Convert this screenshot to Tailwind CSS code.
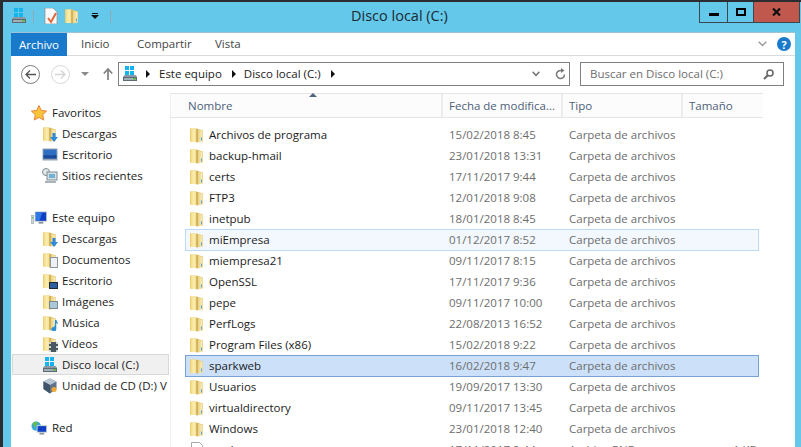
<!DOCTYPE html>
<html lang="es"><head><meta charset="utf-8"><title>Disco local (C:)</title>
<script src="https://cdn.jsdelivr.net/npm/@tailwindcss/browser@4"></script></head>
<body class="m-0 overflow-hidden bg-[#2c2d30]">
<svg width="0" height="0" class="absolute">
<defs>
<linearGradient id="fy" x1="0" x2="1" y1="0" y2="0"><stop offset="0" stop-color="#f2d77e"/><stop offset=".55" stop-color="#fbeeb0"/><stop offset="1" stop-color="#f3dc8c"/></linearGradient>
<linearGradient id="fr" x1="0" x2="1" y1="0" y2="0"><stop offset="0" stop-color="#e9cd78"/><stop offset="1" stop-color="#f8efc4"/></linearGradient>
</defs>
<symbol id="folder" viewBox="0 0 16 16"><path d="M1 1.500h6.500L14 3.500V14.500H1z" fill="#e6c76e"/><path d="M1.500 1.500H7.500V15H1.500z" fill="url(#fy)"/><path d="M8.500 2.500l5 1.500V14.500l-5 1z" fill="url(#fr)"/><path d="M8 2v13.500" stroke="#bd9a45" stroke-width="1"/><path d="M12 10.500h1v3h-1z" fill="#5aa3d6"/></symbol>
<symbol id="drive" viewBox="0 0 16 16"><g fill="#14b4ef"><path d="M3 0h4v4H3zM8 0h4v4H8zM3 5h4v4H3zM8 5h4v4H8z" /></g><path d="M1 10.500 2.500 9h11l1.500 1.500V15H1z" fill="#8c99a3"/><path d="M1 11h14v4H1z" fill="#5f6b73"/><path d="M2 12h12v2H2z" fill="#9fb0b8"/><path d="M11 12h3v1.500h-3z" fill="#58b947"/></symbol>
<symbol id="star" viewBox="0 0 16 16"><path d="M8 .500l2.300 5 5.300.600-3.900 3.600 1 5.300L8 12.400 3.300 15l1-5.300L.400 6.100l5.300-.600z" fill="#fbc53a" stroke="#e9823a"/></symbol>
<symbol id="monitor" viewBox="0 0 16 16"><rect x=".5" y="1.500" width="15" height="12" fill="#96a5b5"/><rect x="1.500" y="2.500" width="13" height="9" fill="#2f6ec0"/><path d="M1.500 8c4 0 8 1 13 0v3.500h-13z" fill="#1a4a98"/></symbol>
<symbol id="recent" viewBox="0 0 16 16"><circle cx="4" cy="4" r="3.500" fill="#e6e9eb" stroke="#7c8a92"/><rect x="5" y="4" width="10" height="8" fill="#d7dee2" stroke="#808e96"/><rect x="7" y="6" width="6" height="4" fill="#72b0d4"/><rect x="3" y="13" width="11" height="2" fill="#aab4ba"/></symbol>
<symbol id="pc" viewBox="0 0 18 16"><rect x="0" y="5" width="3" height="9" fill="#cfd6da" stroke="#86919a" stroke-width=".5"/><rect x=".8" y="7" width="1.400" height="1.400" fill="#4cc04a"/><rect x="4" y="1" width="13" height="11" fill="#c5ced4"/><rect x="5" y="2" width="11" height="9" fill="#0f3fc4"/><path d="M5 2h7l-3 9H5z" fill="#2f78e4"/><rect x="8" y="12" width="5" height="2" fill="#8d98a0"/></symbol>
<symbol id="globe" viewBox="0 0 18 16"><circle cx="5.500" cy="6" r="5" fill="#3ba9d6"/><path d="M2 3c2-2 5-2 5 0s-2 1-2 3-3 1-3-3z" fill="#66bb4c"/><rect x="6" y="5" width="11" height="8" fill="#c6d0d6"/><rect x="7" y="6" width="9" height="6" fill="#0f3fc4"/><rect x="9" y="13" width="5" height="2" fill="#8d98a0"/></symbol>
<symbol id="cd" viewBox="0 0 16 16"><path d="M8 .500 14.500 3.500V11L8 15.500 1.500 11V3.500z" fill="#5f7488"/><path d="M8 .500 14.500 3.500 8 7 1.500 3.500z" fill="#b9c8d4"/><path d="M1.500 3.500 8 7v8.500L1.500 11z" fill="#3f5468"/><circle cx="12" cy="11.500" r="2.500" fill="#f3a733"/></symbol>
<symbol id="arrowdn" viewBox="0 0 8 9"><path d="M2.500 0h3v4H8L4 9 0 4h2.500z" fill="#2b8ade"/></symbol>
</svg>

<div class="flex flex-col w-[801px] h-[447px] mt-[2px] ml-[3px] bg-[#63c8ea] overflow-hidden font-['Open_Sans','Noto_Sans',sans-serif] text-[11.5px] text-[#1b1b1b] leading-none">
  <!-- title bar -->
  <div class="flex items-start h-[30px] shrink-0">
    <div class="flex items-center gap-[6px] w-[345px] pl-[8px] pt-[6px]">
      <svg class="w-[16px] h-[16px]"><use href="#drive"/></svg>
      <span class="w-px h-[13px] bg-[#8fa9b5]"></span>
      <svg class="w-[16px] h-[16px] ml-[3px]" viewBox="0 0 16 16"><path d="M2 0h8l4 4v12H2z" fill="#fafafa" stroke="#8d8d8d" stroke-width=".7"/><path d="M5 10l3 4 5-9" fill="none" stroke="#e2683a" stroke-width="2"/></svg>
      <svg class="w-[16px] h-[16px] -ml-[1px]"><use href="#folder"/></svg>
      <svg class="w-[8px] h-[6px] ml-[5px]" viewBox="0 0 8 6"><path d="M1 0h6v1H1zM0 2h8L4 6z" fill="#111"/></svg>
      <span class="w-px h-[13px] bg-[#8fa9b5] ml-[5px]"></span>
    </div>
    <div class="flex-1 pt-[7px] pl-[3px] text-[14.5px] text-[#1c2a30]">Disco local (C:)</div>
    <div class="flex h-[21px] w-[101px] mr-[4px] border border-t-0 border-[#39474e] shrink-0">
      <div class="flex w-[28px] items-center justify-center border-r border-[#39474e]"><span class="block w-[10px] h-[3px] mt-[4px] bg-black"></span></div>
      <div class="flex w-[26px] items-center justify-center border-r border-[#39474e]"><span class="block w-[10px] h-[8px] border-2 border-black"></span></div>
      <div class="flex flex-1 items-center justify-center bg-[#c0584e]"><svg class="w-[9px] h-[8px]" viewBox="0 0 9 8"><path d="M1 .5l7 7M8 .5l-7 7" stroke="#111" stroke-width="2.200"/></svg></div>
    </div>
  </div>
  <!-- window -->
  <div class="flex flex-col w-[784px] ml-[8px] flex-1 bg-white min-h-0">
    <!-- ribbon tabs -->
    <div class="flex items-stretch h-[24px] shrink-0 border-t border-[#9cc4d6] border-b border-b-[#dadbdc]">
      <div class="flex items-center justify-center w-[56px] -mb-px bg-[#1979ca] text-white">Archivo</div>
      <div class="flex items-center pl-[14px] w-[56px] text-[#444]">Inicio</div>
      <div class="flex items-center pl-[14px] w-[80px] text-[#444]">Compartir</div>
      <div class="flex items-center pl-[12px] w-[50px] text-[#444]">Vista</div>
      <div class="flex flex-1 items-center justify-end gap-[10px] pr-[4px]">
        <svg class="w-[9px] h-[6px]" viewBox="0 0 9 6"><path d="M.7.700 4.500 4.500 8.300.700" fill="none" stroke="#9a9a9a" stroke-width="1.400"/></svg>
        <span class="flex items-center justify-center w-[14px] h-[14px] rounded-full bg-[#1979ca] text-white font-bold text-[11px]">?</span>
      </div>
    </div>
    <!-- nav -->
    <div class="flex items-center h-[37px] pb-[1px] shrink-0">
      <div class="flex items-center w-[107px] pl-[10px] shrink-0">
        <span class="flex items-center justify-center w-[19px] h-[19px] rounded-full border border-[#7a7a7a]"><svg class="w-[11px] h-[9px]" viewBox="0 0 11 9"><path d="M5 .5 1 4.500 5 8.500M1 4.500h10" fill="none" stroke="#555" stroke-width="1.300"/></svg></span>
        <span class="flex items-center justify-center w-[19px] h-[19px] ml-[11px] rounded-full border border-[#d8d8d8]"><svg class="w-[11px] h-[9px]" viewBox="0 0 11 9"><path d="M6 .5 10 4.500 6 8.500M0 4.500h10" fill="none" stroke="#d4d4d4" stroke-width="1.300"/></svg></span>
        <span class="w-0 h-0 ml-[11px] border-x-[4px] border-x-transparent border-t-[4px] border-t-[#8a8a8a]"></span>
        <svg class="w-[10px] h-[12px] ml-[14px]" viewBox="0 0 10 12"><path d="M.8 5.500 5 1l4.200 4.500M5 1v11" fill="none" stroke="#7f7f7f" stroke-width="1.700"/></svg>
      </div>
      <div class="flex items-center w-[452px] h-[24px] border border-[#7f7f7f] shrink-0 pl-[3px]">
        <svg class="w-[16px] h-[16px]"><use href="#drive"/></svg>
        <span class="w-0 h-0 ml-[8px] border-y-[4px] border-y-transparent border-l-[4px] border-l-[#111]"></span>
        <span class="ml-[9px]">Este equipo</span>
        <span class="w-0 h-0 ml-[10px] border-y-[4px] border-y-transparent border-l-[4px] border-l-[#111]"></span>
        <span class="ml-[8px]">Disco local (C:)</span>
        <span class="w-0 h-0 ml-[10px] border-y-[4px] border-y-transparent border-l-[4px] border-l-[#111]"></span>
        <span class="flex-1"></span>
        <svg class="w-[8px] h-[6px] mr-[15px]" viewBox="0 0 8 6"><path d="M.7.700 4 4.500 7.300.700" fill="none" stroke="#666" stroke-width="1.300"/></svg>
        <svg class="w-[11px] h-[12px] mr-[3px]" viewBox="0 0 11 12"><path d="M9.500 6.500a4 4 0 1 1-2-3.500" fill="none" stroke="#777" stroke-width="1.500"/><path d="M6 0v5l3.500-2.500z" fill="#777"/></svg>
      </div>
      <div class="flex items-center justify-between w-[204px] h-[24px] ml-[10px] border border-[#7f7f7f] pl-[9px] pr-[9px] text-[#6d6d6d]">
        <span>Buscar en Disco local (C:)</span>
        <svg class="w-[11px] h-[11px]" viewBox="0 0 11 11"><circle cx="7" cy="4" r="3" fill="none" stroke="#666" stroke-width="1.500"/><path d="M4.800 6.200 1 10" stroke="#666" stroke-width="2"/></svg>
      </div>
    </div>
    <!-- main -->
    <div class="flex flex-1 min-h-0">
      <!-- sidebar -->
      <nav class="flex flex-col w-[160px] pt-[9px] shrink-0 border-r border-[#f0f0f0] overflow-hidden">
        <div class="flex items-center h-[21px] pl-[20px] gap-[5px]"><svg class="w-[16px] h-[16px]"><use href="#star"/></svg>Favoritos</div>
        <div class="flex items-center h-[21px] pl-[31px] gap-[4px]"><span class="relative w-[16px] h-[16px]"><svg class="w-[16px] h-[16px]"><use href="#folder"/></svg><svg class="absolute right-0 bottom-0 w-[8px] h-[9px]"><use href="#arrowdn"/></svg></span>Descargas</div>
        <div class="flex items-center h-[21px] pl-[31px] gap-[4px]"><svg class="w-[16px] h-[16px]"><use href="#monitor"/></svg>Escritorio</div>
        <div class="flex items-center h-[21px] pl-[31px] gap-[4px]"><svg class="w-[16px] h-[16px]"><use href="#recent"/></svg>Sitios recientes</div>
        <div class="h-[21px]"></div>
        <div class="flex items-center h-[21px] pl-[20px] gap-[4px]"><svg class="w-[17px] h-[16px]"><use href="#pc"/></svg>Este equipo</div>
        <div class="flex items-center h-[21px] pl-[31px] gap-[4px]"><span class="relative w-[16px] h-[16px]"><svg class="w-[16px] h-[16px]"><use href="#folder"/></svg><svg class="absolute right-0 bottom-0 w-[8px] h-[9px]"><use href="#arrowdn"/></svg></span>Descargas</div>
        <div class="flex items-center h-[21px] pl-[31px] gap-[4px]"><span class="relative w-[16px] h-[16px]"><svg class="w-[16px] h-[16px]"><use href="#folder"/></svg><span class="absolute right-0 bottom-0 w-[8px] h-[11px] bg-[#eef1f3] border border-[#8b969e]"></span></span>Documentos</div>
        <div class="flex items-center h-[21px] pl-[31px] gap-[4px]"><span class="relative w-[16px] h-[16px]"><svg class="w-[16px] h-[16px]"><use href="#folder"/></svg><span class="absolute right-0 bottom-0 w-[9px] h-[7px] bg-[#2f5e9e] border border-[#1d2a3a]"></span></span>Escritorio</div>
        <div class="flex items-center h-[21px] pl-[31px] gap-[4px]"><span class="relative w-[16px] h-[16px]"><svg class="w-[16px] h-[16px]"><use href="#folder"/></svg><span class="absolute right-0 bottom-[1px] w-[9px] h-[8px] bg-[#a9c7d6] border border-[#7b8a92]"></span></span>Imágenes</div>
        <div class="flex items-center h-[21px] pl-[31px] gap-[4px]"><span class="relative w-[16px] h-[16px]"><svg class="w-[16px] h-[16px]"><use href="#folder"/></svg><svg class="absolute right-0 bottom-0 w-[8px] h-[11px]" viewBox="0 0 8 11"><path d="M5 0h1.500c0 2 1.500 2 1.500 4L6.300 3V9a2.500 2 0 1 1-1.300-1.700z" fill="#2a8fd6"/></svg></span>Música</div>
        <div class="flex items-center h-[21px] pl-[31px] gap-[4px]"><span class="relative w-[16px] h-[16px]"><svg class="w-[16px] h-[16px]"><use href="#folder"/></svg><span class="absolute right-0 bottom-0 w-[9px] h-[10px] bg-[#4a5860] border-x-2 border-dotted border-[#cfd6da]"></span></span>Vídeos</div>
        <div class="flex items-center h-[21px] ml-[1px] pl-[29px] gap-[4px] w-[157px] bg-[#f0f0f0] border border-[#d9d9d9]"><svg class="w-[16px] h-[16px]"><use href="#drive"/></svg>Disco local (C:)</div>
        <div class="flex items-center h-[21px] pl-[31px] gap-[4px] whitespace-nowrap overflow-hidden"><svg class="w-[16px] h-[16px] shrink-0"><use href="#cd"/></svg>Unidad de CD (D:) V</div>
        <div class="h-[21px]"></div>
        <div class="flex items-center h-[21px] pl-[20px] gap-[4px]"><svg class="w-[17px] h-[16px]"><use href="#globe"/></svg>Red</div>
      </nav>
      <!-- list -->
      <section class="flex flex-col flex-1 min-w-0 text-[#6d6d6d]">
        <div class="relative flex h-[25px] w-[592px] shrink-0 bg-[#fcfcfc] border-y border-[#e5e5e5] text-[#4c607a]">
          <span class="absolute left-[138px] -top-[1px] w-0 h-0 border-x-[4px] border-x-transparent border-b-[4px] border-b-[#51647a]"></span>
          <div class="flex items-center w-[272px] pl-[17px] border-r-2 border-[#ececec]">Nombre</div>
          <div class="flex items-center w-[120px] pl-[6px] border-r-2 border-[#ececec]">Fecha de modifica...</div>
          <div class="flex items-center w-[120px] pl-[6px] border-r-2 border-[#ececec]">Tipo</div>
          <div class="flex items-center flex-1 pl-[6px]">Tamaño</div>
        </div>
        <div class="pt-[6px] pl-[14px]">
          <div class="flex items-center h-[21px] w-[574px] pl-[3px] border border-transparent"><svg class="w-[16px] h-[16px]"><use href="#folder"/></svg><span class="w-[240px] ml-[4px] text-[#1b1b1b]">Archivos de programa</span><span class="w-[120px]">15/02/2018 8:45</span><span>Carpeta de archivos</span></div>
          <div class="flex items-center h-[21px] w-[574px] pl-[3px] border border-transparent"><svg class="w-[16px] h-[16px]"><use href="#folder"/></svg><span class="w-[240px] ml-[4px] text-[#1b1b1b]">backup-hmail</span><span class="w-[120px]">23/01/2018 13:31</span><span>Carpeta de archivos</span></div>
          <div class="flex items-center h-[21px] w-[574px] pl-[3px] border border-transparent"><svg class="w-[16px] h-[16px]"><use href="#folder"/></svg><span class="w-[240px] ml-[4px] text-[#1b1b1b]">certs</span><span class="w-[120px]">17/11/2017 9:44</span><span>Carpeta de archivos</span></div>
          <div class="flex items-center h-[21px] w-[574px] pl-[3px] border border-transparent"><svg class="w-[16px] h-[16px]"><use href="#folder"/></svg><span class="w-[240px] ml-[4px] text-[#1b1b1b]">FTP3</span><span class="w-[120px]">12/01/2018 9:08</span><span>Carpeta de archivos</span></div>
          <div class="flex items-center h-[21px] w-[574px] pl-[3px] border border-transparent"><svg class="w-[16px] h-[16px]"><use href="#folder"/></svg><span class="w-[240px] ml-[4px] text-[#1b1b1b]">inetpub</span><span class="w-[120px]">18/01/2018 8:45</span><span>Carpeta de archivos</span></div>
          <div class="flex items-center h-[22px] -mb-px w-[574px] pl-[3px] bg-[#f3f8fe] border border-[#bcd9f5]"><svg class="w-[16px] h-[16px]"><use href="#folder"/></svg><span class="w-[240px] ml-[4px] text-[#1b1b1b]">miEmpresa</span><span class="w-[120px]">01/12/2017 8:52</span><span>Carpeta de archivos</span></div>
          <div class="flex items-center h-[21px] w-[574px] pl-[3px] border border-transparent"><svg class="w-[16px] h-[16px]"><use href="#folder"/></svg><span class="w-[240px] ml-[4px] text-[#1b1b1b]">miempresa21</span><span class="w-[120px]">09/11/2017 8:15</span><span>Carpeta de archivos</span></div>
          <div class="flex items-center h-[21px] w-[574px] pl-[3px] border border-transparent"><svg class="w-[16px] h-[16px]"><use href="#folder"/></svg><span class="w-[240px] ml-[4px] text-[#1b1b1b]">OpenSSL</span><span class="w-[120px]">17/11/2017 9:36</span><span>Carpeta de archivos</span></div>
          <div class="flex items-center h-[21px] w-[574px] pl-[3px] border border-transparent"><svg class="w-[16px] h-[16px]"><use href="#folder"/></svg><span class="w-[240px] ml-[4px] text-[#1b1b1b]">pepe</span><span class="w-[120px]">09/11/2017 10:00</span><span>Carpeta de archivos</span></div>
          <div class="flex items-center h-[21px] w-[574px] pl-[3px] border border-transparent"><svg class="w-[16px] h-[16px]"><use href="#folder"/></svg><span class="w-[240px] ml-[4px] text-[#1b1b1b]">PerfLogs</span><span class="w-[120px]">22/08/2013 16:52</span><span>Carpeta de archivos</span></div>
          <div class="flex items-center h-[21px] w-[574px] pl-[3px] border border-transparent"><svg class="w-[16px] h-[16px]"><use href="#folder"/></svg><span class="w-[240px] ml-[4px] text-[#1b1b1b]">Program Files (x86)</span><span class="w-[120px]">15/02/2018 9:22</span><span>Carpeta de archivos</span></div>
          <div class="flex items-center h-[22px] -mb-px w-[574px] pl-[3px] bg-[#cce1f9] border border-[#78a2d2]"><svg class="w-[16px] h-[16px]"><use href="#folder"/></svg><span class="w-[240px] ml-[4px] text-[#1b1b1b]">sparkweb</span><span class="w-[120px]">16/02/2018 9:47</span><span>Carpeta de archivos</span></div>
          <div class="flex items-center h-[21px] w-[574px] pl-[3px] border border-transparent"><svg class="w-[16px] h-[16px]"><use href="#folder"/></svg><span class="w-[240px] ml-[4px] text-[#1b1b1b]">Usuarios</span><span class="w-[120px]">19/09/2017 13:30</span><span>Carpeta de archivos</span></div>
          <div class="flex items-center h-[21px] w-[574px] pl-[3px] border border-transparent"><svg class="w-[16px] h-[16px]"><use href="#folder"/></svg><span class="w-[240px] ml-[4px] text-[#1b1b1b]">virtualdirectory</span><span class="w-[120px]">09/11/2017 13:45</span><span>Carpeta de archivos</span></div>
          <div class="flex items-center h-[21px] w-[574px] pl-[3px] border border-transparent"><svg class="w-[16px] h-[16px]"><use href="#folder"/></svg><span class="w-[240px] ml-[4px] text-[#1b1b1b]">Windows</span><span class="w-[120px]">23/01/2018 12:40</span><span>Carpeta de archivos</span></div>
          <div class="flex items-center h-[21px] w-[574px] pl-[3px] border border-transparent"><svg class="w-[16px] h-[16px]" viewBox="0 0 16 16"><path d="M2.500.5h8l3 3v12h-11z" fill="#fff" stroke="#a8a8a8"/></svg><span class="w-[240px] ml-[4px] text-[#1b1b1b]">readme</span><span class="w-[120px]">17/11/2017 9:44</span><span class="w-[164px]">Archivo PND</span><span>1 KB</span></div>
        </div>
      </section>
    </div>
  </div>
</div>
</body></html>
